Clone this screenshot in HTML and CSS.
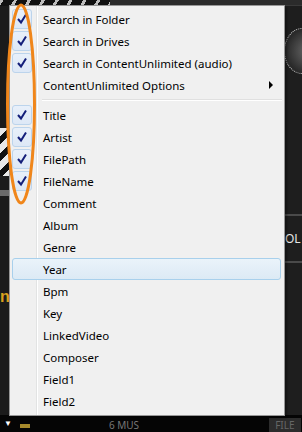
FILE: index.html
```html
<!DOCTYPE html>
<html lang="en">
<head>
    <meta charset="UTF-8">
    <title>Search fields menu</title>
    <link rel="stylesheet" href="styles.css">
</head>
<body>
    <div class="app">
        <div class="top-strip">
            <div class="dial-edge"></div>
            <div class="top-panel"></div>
        </div>
        <div class="middle">
            <div class="left-strip">
                <div class="stripes"></div>
                <div class="grey-bar"></div>
                <div class="gold-letter">n</div>
            </div>
            <div class="menu-space"></div>
            <div class="right-strip">
                <div class="knob"></div>
                <div class="panel-line"></div>
                <div class="panel-label">OL</div>
                <div class="panel-line"></div>
            </div>
        </div>
        <div class="bottom-strip">
            <span class="tri">&#9660;</span>
            <span class="gold-bar"></span>
            <span class="mus">6 MUS</span>
            <span class="file-tab">FILE</span>
        </div>
    </div>

    <div class="menu">
        <div class="menu-item checked"><span class="check"></span><span class="label">Search in Folder</span></div>
        <div class="menu-item checked"><span class="check"></span><span class="label">Search in Drives</span></div>
        <div class="menu-item checked"><span class="check"></span><span class="label">Search in ContentUnlimited (audio)</span></div>
        <div class="menu-item"><span class="check"></span><span class="label">ContentUnlimited Options</span><span class="arrow"></span></div>
        <div class="menu-separator"></div>
        <div class="menu-item checked"><span class="check"></span><span class="label">Title</span></div>
        <div class="menu-item checked"><span class="check"></span><span class="label">Artist</span></div>
        <div class="menu-item checked"><span class="check"></span><span class="label">FilePath</span></div>
        <div class="menu-item checked"><span class="check"></span><span class="label">FileName</span></div>
        <div class="menu-item"><span class="check"></span><span class="label">Comment</span></div>
        <div class="menu-item"><span class="check"></span><span class="label">Album</span></div>
        <div class="menu-item"><span class="check"></span><span class="label">Genre</span></div>
        <div class="menu-item hover"><span class="check"></span><span class="label">Year</span></div>
        <div class="menu-item"><span class="check"></span><span class="label">Bpm</span></div>
        <div class="menu-item"><span class="check"></span><span class="label">Key</span></div>
        <div class="menu-item"><span class="check"></span><span class="label">LinkedVideo</span></div>
        <div class="menu-item"><span class="check"></span><span class="label">Composer</span></div>
        <div class="menu-item"><span class="check"></span><span class="label">Field1</span></div>
        <div class="menu-item"><span class="check"></span><span class="label">Field2</span></div>
    </div>

    <svg class="marker" width="40" height="212" viewBox="0 0 40 212">
        <ellipse cx="21" cy="104" rx="13.5" ry="99" fill="none" stroke="#f0861a" stroke-width="3"/>
    </svg>
</body>
</html>
```

FILE: styles.css
```css
body {
    margin: 0;
    width: 302px;
    height: 432px;
    overflow: hidden;
    background-color: #151515;
    font-family: 'Segoe UI', 'Noto Sans', sans-serif;
    position: relative;
}

.app {
    display: flex;
    flex-direction: column;
    height: 432px;
}

.top-strip {
    height: 6px;
    display: flex;
}

.dial-edge {
    width: 110px;
    background: repeating-linear-gradient(120deg, #bdbdbd 0 3px, #111 3px 12px);
}

.top-panel {
    flex-grow: 1;
    background-color: #2b2b2b;
    border-bottom: 1px solid #3a3a3a;
}

.middle {
    flex-grow: 1;
    display: flex;
}

.left-strip {
    width: 9px;
    overflow: hidden;
    background-color: #1b1b1b;
    display: flex;
    flex-direction: column;
    padding-top: 122px;
}

.stripes {
    height: 48px;
    background: repeating-linear-gradient(135deg, #e8e8e8 0 6px, #101010 6px 12px);
}

.grey-bar {
    height: 6px;
    margin-top: 14px;
    background-color: #6a6a6a;
}

.gold-letter {
    margin-top: 92px;
    color: #d9a21e;
    font-family: 'Liberation Sans', sans-serif;
    font-weight: bold;
    font-size: 16px;
}

.menu-space {
    flex-grow: 1;
}

.right-strip {
    width: 18px;
    overflow: hidden;
    background-color: #1e1e1e;
    display: flex;
    flex-direction: column;
    padding-top: 22px;
}

.knob {
    width: 34px;
    height: 44px;
    flex-shrink: 0;
    border-radius: 50%;
    background: radial-gradient(circle at 70% 50%, #6a6a6a, #2a2a2a 70%);
    border: 1px dotted #cfcfcf;
}

.panel-line {
    height: 2px;
    background-color: #4a4a4a;
    margin-top: 140px;
}

.panel-label {
    margin-top: 14px;
    color: #e6e6e6;
    font-family: 'Noto Sans', sans-serif;
    font-size: 12px;
    margin-left: 1px;
}

.right-strip .panel-line + .panel-label + .panel-line {
    margin-top: 14px;
}

.bottom-strip {
    height: 17px;
    background-color: #050505;
    display: flex;
    align-items: flex-end;
    color: #cfcfcf;
    font-family: 'Noto Sans', sans-serif;
    font-size: 10px;
}

.tri {
    margin-left: 4px;
    margin-bottom: 4px;
    font-size: 8px;
    color: #ffffff;
}

.gold-bar {
    width: 10px;
    height: 4px;
    background-color: #a68a2c;
    margin-left: 8px;
    margin-bottom: 4px;
}

.mus {
    margin-left: 79px;
    color: #777;
}

.file-tab {
    margin-left: 130px;
    padding: 0 6px;
    background-color: #2c2c2c;
    color: #666;
}

/* popup menu */
.menu {
    position: absolute;
    left: 9px;
    top: 5px;
    width: 270px;
    padding: 2px 2px 3px 2px;
    background-color: #f0f0f0;
    border: 1px solid #979797;
    box-shadow: 2px 2px 2px rgba(0, 0, 0, 0.35);
    background-image: linear-gradient(to right, transparent 26px, #e2e3e3 26px, #e2e3e3 27px, #ffffff 27px, #ffffff 28px, transparent 28px);
}

.menu-item {
    height: 22px;
    display: flex;
    align-items: center;
    font-size: 11.5px;
    color: #000;
    border: 1px solid transparent;
    border-radius: 3px;
    box-sizing: border-box;
    position: relative;
}

.menu-item.hover {
    border-color: #a8d0ec;
    background: linear-gradient(#eaf3fa, #dceaf5);
    margin-right: 1px;
}

.check {
    width: 18px;
    height: 18px;
    margin-left: -1px;
    border: 1px solid transparent;
    border-radius: 3px;
    flex-shrink: 0;
}

.checked .check {
    border-color: #bcd4ec;
    background-image: url("data:image/svg+xml,%3Csvg xmlns='http://www.w3.org/2000/svg' width='18' height='18'%3E%3Cpath d='M5 9 L8 12.5 L13 4.5' fill='none' stroke='%23141f7a' stroke-width='2'/%3E%3C/svg%3E"), linear-gradient(#e8f0fa, #dde8f6);
}

.label {
    margin-left: 11px;
    white-space: nowrap;
}

.arrow {
    position: absolute;
    right: 8px;
    top: 6px;
    width: 0;
    height: 0;
    border-top: 4px solid transparent;
    border-bottom: 4px solid transparent;
    border-left: 4px solid #000;
}

.menu-separator {
    height: 8px;
    margin-left: 30px;
    background: linear-gradient(transparent 3px, #e0e0e0 3px, #e0e0e0 4px, #ffffff 4px, #ffffff 5px, transparent 5px);
}

.marker {
    position: absolute;
    left: 0;
    top: 0;
}
```
